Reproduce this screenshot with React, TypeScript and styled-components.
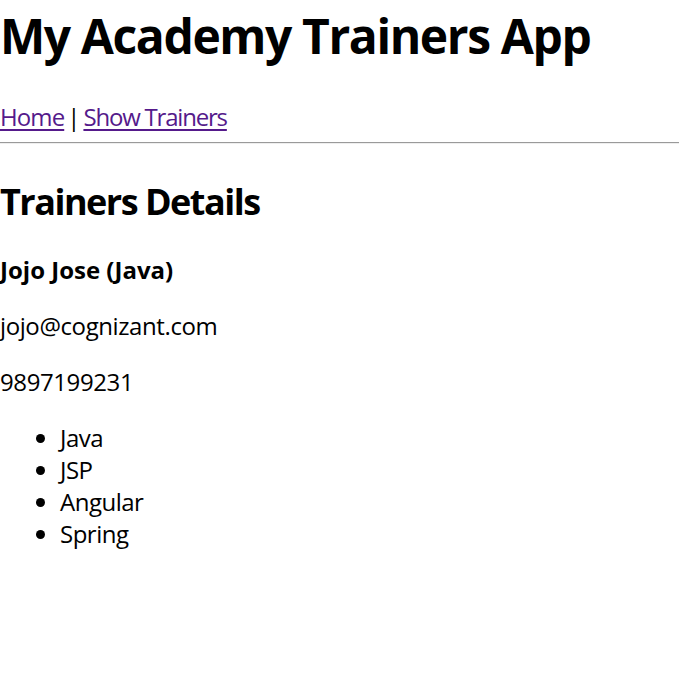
import React from "react";
import styled, { createGlobalStyle } from "styled-components";

const Global = createGlobalStyle`
  html, body {
    margin: 0;
    padding: 0;
    background: #ffffff;
  }
  body {
    font-family: "Open Sans", "Noto Sans", sans-serif;
    font-size: 24px;
    line-height: 32px;
    color: #000000;
  }
`;

const Page = styled.div`
  display: flex;
  flex-direction: column;
`;

const Title = styled.h1`
  font-size: 48px;
  line-height: 64px;
  font-weight: 700;
  letter-spacing: -1.4px;
  margin: 4px 0 33px 0;
`;

const Nav = styled.nav`
  display: flex;
  align-items: baseline;
  gap: 3px;
  line-height: 32px;
`;

const NavLink = styled.a<{ $tight?: boolean }>`
  color: #551a8b;
  text-decoration: underline;
  text-underline-offset: 3px;
  letter-spacing: ${(p) => (p.$tight ? "-1.2px" : "-0.9px")};
  cursor: pointer;
`;

const Separator = styled.span`
  color: #000000;
`;

const Divider = styled.hr`
  margin: 9px 0 0 0;
  border: none;
  border-top: 1px solid #9a9a9a;
  border-bottom: 1px solid #eeeeee;
  height: 0;
`;

const Section = styled.section`
  display: flex;
  flex-direction: column;
`;

const Heading = styled.h2`
  font-size: 36px;
  line-height: 48px;
  font-weight: 700;
  letter-spacing: -1.5px;
  margin: 34px 0 0 0;
`;

const Para = styled.p<{ $bold?: boolean; $gap?: number }>`
  margin: ${(p) => p.$gap ?? 24}px 0 0 0;
  font-weight: ${(p) => (p.$bold ? 700 : 400)};
  letter-spacing: ${(p) => (p.$bold ? "0px" : "-0.4px")};
`;

const Skills = styled.ul`
  margin: 24px 0 0 0;
  padding-left: 60px;
  list-style: disc;
`;

const Skill = styled.li`
  line-height: 32px;
  letter-spacing: -0.5px;
`;

export default function App() {
  const skills = ["Java", "JSP", "Angular", "Spring"];
  return (
    <Page>
      <Global />
      <Title>My Academy Trainers App</Title>
      <Nav>
        <NavLink href="#">Home</NavLink>
        <Separator>|</Separator>
        <NavLink href="#" $tight>Show Trainers</NavLink>
      </Nav>
      <Divider />
      <Section>
        <Heading>Trainers Details</Heading>
        <Para $bold $gap={28}>Jojo Jose (Java)</Para>
        <Para>jojo@cognizant.com</Para>
        <Para>9897199231</Para>
        <Skills>
          {skills.map((s) => (
            <Skill key={s}>{s}</Skill>
          ))}
        </Skills>
      </Section>
    </Page>
  );
}
